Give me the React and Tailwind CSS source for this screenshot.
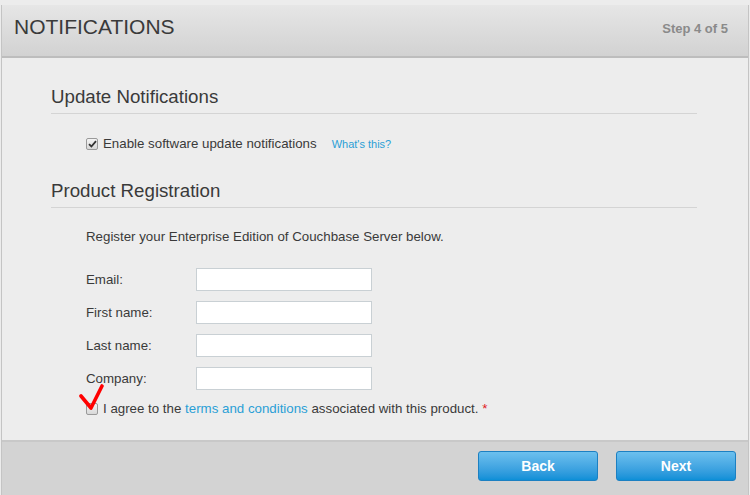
import React from "react";

function Box({ checked }) {
  return (
    <span className="relative inline-flex h-[12px] w-[12px] shrink-0 items-center justify-center rounded-[2px] border border-[#9a9a9a] bg-gradient-to-b from-[#f4f4f4] to-[#d8d8d8]">
      {checked && (
        <svg width="9" height="8" viewBox="0 0 9 8">
          <path d="M1 4.2 L3.4 6.5 L8 1.2" fill="none" stroke="#333" strokeWidth="1.8" />
        </svg>
      )}
    </span>
  );
}

function Row({ label }) {
  return (
    <div className="flex h-[23px] items-center">
      <span className="w-[110px] text-[13.3px] text-[#3a3a3a]">{label}</span>
      <div className="h-[23px] w-[176px] border border-[#c9d0d4] bg-white" />
    </div>
  );
}

export default function App() {
  return (
    <div
      className="flex h-[495px] w-[750px] flex-col bg-[#ececec] px-[1px] pt-[5px]"
      style={{ fontFamily: '"Liberation Sans", Arial, sans-serif' }}
    >
      <div className="flex flex-1 flex-col border-x border-[#c4c4c4]">
        <div className="flex h-[53px] shrink-0 items-start justify-between border-b-2 border-[#bdbdbd] bg-gradient-to-b from-[#e6e6e6] to-[#d2d2d2] pl-[12px] pr-[20px]">
          <span className="mt-[9px] text-[21px] leading-[26px] text-[#3a3a3a]">NOTIFICATIONS</span>
          <span className="mt-[16px] text-[13px] leading-[16px] font-bold text-[#8a8a8a]">Step 4 of 5</span>
        </div>
        <div className="flex-1 bg-[#ededed] pl-[49px] pr-[51px] pt-[28px]">
          <div className="border-b border-[#d4d4d4] pb-[5px] text-[18.7px] leading-[22px] text-[#3a3a3a]">
            Update Notifications
          </div>
          <div className="mt-[22px] flex h-[16px] items-center pl-[35px]">
            <Box checked />
            <span className="ml-[5px] text-[13.3px] text-[#3a3a3a]">Enable software update notifications</span>
            <span className="ml-[15px] text-[11px] text-[#2a9fd6]">What's this?</span>
          </div>
          <div className="mt-[28px] border-b border-[#d4d4d4] pb-[5px] text-[18.7px] leading-[22px] text-[#3a3a3a]">
            Product Registration
          </div>
          <div className="mt-[21px] pl-[35px] text-[13.3px] leading-[16px] text-[#3a3a3a]">
            Register your Enterprise Edition of Couchbase Server below.
          </div>
          <div className="mt-[23px] flex flex-col gap-[10px] pl-[35px]">
            <Row label="Email:" />
            <Row label="First name:" />
            <Row label="Last name:" />
            <Row label="Company:" />
          </div>
          <div className="relative mt-[11px] flex h-[16px] items-center pl-[35px]">
            <Box />
            <span className="ml-[5px] text-[13.3px] text-[#3a3a3a]">
              I agree to the <span className="text-[#2a9fd6]">terms and conditions</span> associated with this product.{" "}
              <span className="text-[#e0201b]">*</span>
            </span>
            <svg className="absolute left-[27px] top-[-17px]" width="26" height="28" viewBox="0 0 26 28">
              <path d="M3 12 L13 24 L24 2" fill="none" stroke="#ff0000" strokeWidth="3.6" strokeLinecap="round" strokeLinejoin="round" />
            </svg>
          </div>
        </div>
        <div className="flex h-[55px] shrink-0 items-start justify-end gap-[18px] border-t-2 border-[#c8c8c8] bg-[#d3d3d3] pr-[12px] pt-[9px]">
          <button className="h-[30px] w-[120px] rounded-[3px] border border-[#1c80c2] bg-gradient-to-b from-[#6cc0ee] to-[#0b8fd7] text-[14px] font-bold text-white">
            Back
          </button>
          <button className="h-[30px] w-[120px] rounded-[3px] border border-[#1c80c2] bg-gradient-to-b from-[#6cc0ee] to-[#0b8fd7] text-[14px] font-bold text-white">
            Next
          </button>
        </div>
      </div>
    </div>
  );
}
